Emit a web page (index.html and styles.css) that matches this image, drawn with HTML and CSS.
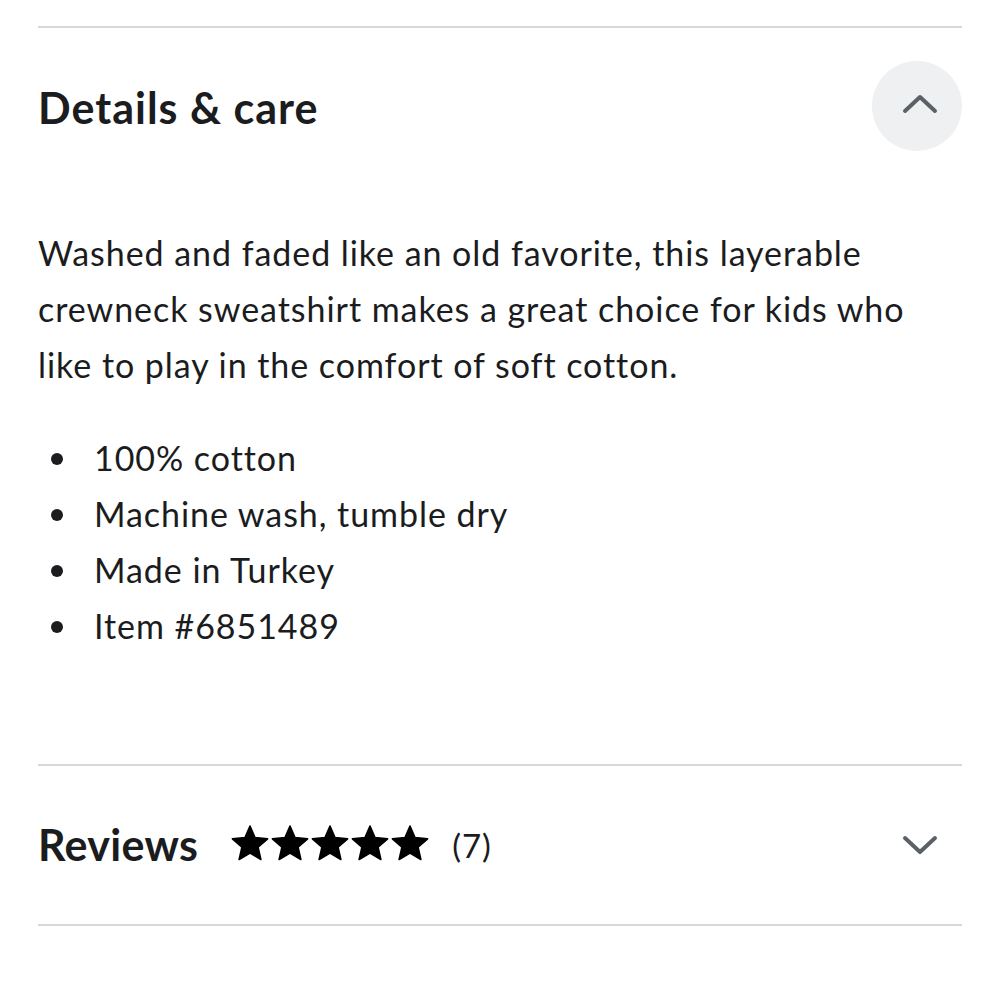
FILE: index.html
```html
<!DOCTYPE html>
<html lang="en">
<head>
<meta charset="utf-8">
<link rel="stylesheet" href="styles.css">
</head>
<body>
<main class="page">
  <section class="panel details">
    <div class="panel-head">
      <h2 class="panel-title title-details">Details &amp; care</h2>
      <button class="toggle toggle-open" aria-label="Collapse">
        <svg viewBox="0 0 36 20" width="36" height="20"><path d="M3 17 L18 3 L33 17" fill="none" stroke="#5b6166" stroke-width="4" stroke-linecap="round" stroke-linejoin="round"/></svg>
      </button>
    </div>
    <p class="desc">Washed and faded like an old favorite, this layerable crewneck sweatshirt makes a great choice for kids who like to play in the comfort of soft cotton.</p>
    <ul class="facts">
      <li>100% cotton</li>
      <li>Machine wash, tumble dry</li>
      <li>Made in Turkey</li>
      <li>Item #6851489</li>
    </ul>
  </section>
  <section class="panel reviews">
    <div class="reviews-head">
      <h2 class="panel-title title-reviews">Reviews</h2>
      <span class="stars">
        <svg viewBox="0 0 40 40" width="40" height="40"><path class="star" d="M20 2L25 13.62L37.59 14.78L28.08 23.13L30.87 35.47L20 29L9.13 35.47L11.92 23.13L2.41 14.78L15 13.62Z"/></svg>
        <svg viewBox="0 0 40 40" width="40" height="40"><path class="star" d="M20 2L25 13.62L37.59 14.78L28.08 23.13L30.87 35.47L20 29L9.13 35.47L11.92 23.13L2.41 14.78L15 13.62Z"/></svg>
        <svg viewBox="0 0 40 40" width="40" height="40"><path class="star" d="M20 2L25 13.62L37.59 14.78L28.08 23.13L30.87 35.47L20 29L9.13 35.47L11.92 23.13L2.41 14.78L15 13.62Z"/></svg>
        <svg viewBox="0 0 40 40" width="40" height="40"><path class="star" d="M20 2L25 13.62L37.59 14.78L28.08 23.13L30.87 35.47L20 29L9.13 35.47L11.92 23.13L2.41 14.78L15 13.62Z"/></svg>
        <svg viewBox="0 0 40 40" width="40" height="40"><path class="star" d="M20 2L25 13.62L37.59 14.78L28.08 23.13L30.87 35.47L20 29L9.13 35.47L11.92 23.13L2.41 14.78L15 13.62Z"/></svg>
      </span>
      <span class="count">(7)</span>
      <span class="spacer"></span>
      <span class="toggle-plain" aria-label="Expand">
        <svg viewBox="0 0 36 20" width="36" height="20"><path d="M3 3 L18 17 L33 3" fill="none" stroke="#5b6166" stroke-width="4" stroke-linecap="round" stroke-linejoin="round"/></svg>
      </span>
    </div>
  </section>
</main>
</body>
</html>
```

FILE: styles.css
```css
html, body {
  margin: 0;
  padding: 0;
  background: #ffffff;
}
body {
  font-family: Lato, "Noto Sans", sans-serif;
  color: #1b1c1e;
}
.page {
  padding: 26px 38px 0;
}
.panel {
  border-top: 2px solid #d6d9db;
}
.details {
  padding-top: 33px;
  padding-bottom: 110px;
}
.panel-head {
  display: flex;
  align-items: center;
  justify-content: space-between;
}
.panel-title {
  margin: 0;
  font-size: 43px;
  font-weight: 700;
  line-height: 1.2;
}
.title-details {
  letter-spacing: 1px;
  margin-top: 3px;
}
.title-reviews {
  letter-spacing: 0.3px;
}
.toggle {
  width: 90px;
  height: 90px;
  border-radius: 50%;
  border: none;
  background: #eef0f2;
  display: flex;
  align-items: center;
  justify-content: center;
  padding: 0;
}
.toggle svg {
  margin-top: -5px;
  margin-left: 6px;
}
.desc {
  margin: 74px 0 0;
  font-size: 34px;
  line-height: 56px;
  letter-spacing: 0.95px;
}
.facts {
  list-style: none;
  margin: 37px 0 0;
  padding: 0;
  font-size: 34px;
  line-height: 56px;
  letter-spacing: 0.95px;
}
.facts li {
  position: relative;
  padding-left: 56px;
}
.facts li::before {
  content: "";
  position: absolute;
  left: 13px;
  top: 23px;
  width: 12px;
  height: 12px;
  border-radius: 50%;
  background: #1b1c1e;
}
.reviews {
  border-bottom: 2px solid #d6d9db;
  height: 158px;
  display: flex;
  align-items: center;
}
.reviews-head {
  display: flex;
  align-items: center;
  width: 100%;
}
.stars {
  display: flex;
  margin-left: 32px;
  gap: 0;
  margin-top: -2px;
}
.star {
  fill: #000000;
  stroke: #000000;
  stroke-width: 1.6;
  stroke-linejoin: round;
}
.count {
  margin-left: 22px;
  font-size: 33px;
  letter-spacing: 1px;
}
.spacer {
  flex: 1;
}
.toggle-plain {
  display: flex;
  margin-right: 24px;
}
```
